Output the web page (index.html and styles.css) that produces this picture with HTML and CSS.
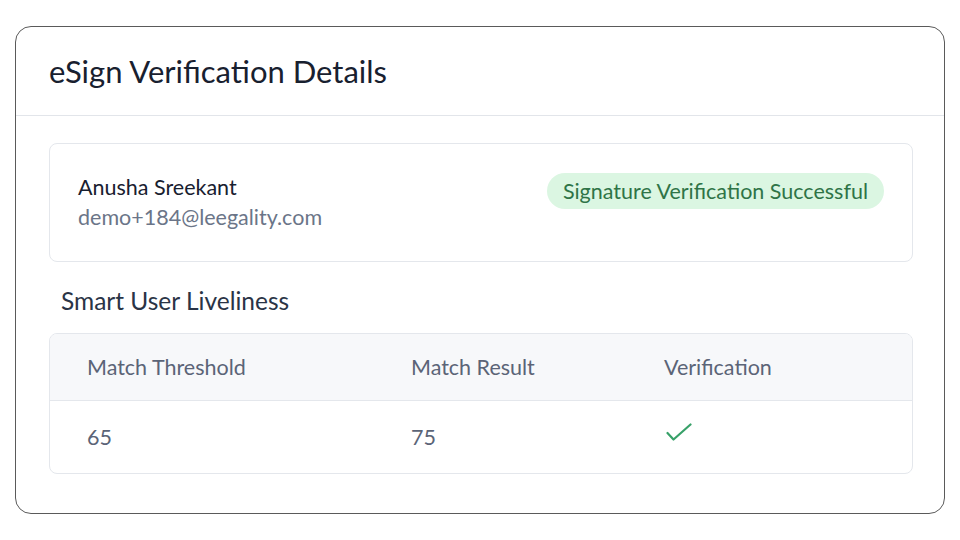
FILE: index.html
```html
<!DOCTYPE html>
<html lang="en">
<head>
<meta charset="utf-8">
<title>eSign Verification Details</title>
<link rel="stylesheet" href="styles.css">
</head>
<body>
<div class="card">
  <div class="card-header">
    <h1 class="title">eSign Verification Details</h1>
  </div>
  <div class="card-body">
    <div class="signer">
      <div class="signer-info">
        <div class="signer-name">Anusha Sreekant</div>
        <div class="signer-email">demo+184@leegality.com</div>
      </div>
      <span class="badge">Signature Verification Successful</span>
    </div>
    <h2 class="section-title">Smart User Liveliness</h2>
    <div class="table">
      <div class="row head">
        <div class="cell">Match Threshold</div>
        <div class="cell">Match Result</div>
        <div class="cell">Verification</div>
      </div>
      <div class="row">
        <div class="cell">65</div>
        <div class="cell">75</div>
        <div class="cell">
          <svg class="check" width="26" height="19" viewBox="0 0 26 19" aria-hidden="true">
            <path d="M1.5 10 L7.5 16.5 L24.5 1.5" fill="none" stroke="#38a169" stroke-width="2.2" stroke-linecap="round" stroke-linejoin="round"/>
          </svg>
        </div>
      </div>
    </div>
  </div>
</div>
</body>
</html>
```
FILE: styles.css
```css
* { box-sizing: border-box; }
html, body { margin: 0; padding: 0; background: #ffffff; }
body {
  font-family: Lato, "Open Sans", sans-serif;
  padding: 26px 15px 0 15px;
}
.card {
  width: 930px;
  height: 488px;
  border: 1px solid #5a5a5a;
  border-radius: 16px;
  background: #fff;
}
.card-header {
  height: 89px;
  border-bottom: 1px solid #e2e5ea;
  display: flex;
  align-items: center;
  padding: 0 33px;
}
.title {
  margin: 0;
  font-size: 31px;
  font-weight: 400;
  color: #18202f;
}
.card-body {
  padding: 27px 31px 0 33px;
}
.signer {
  border: 1px solid #e4e7ec;
  border-radius: 8px;
  padding: 28px 28px 29px 28px;
  display: flex;
  justify-content: space-between;
  align-items: flex-start;
}
.signer-name {
  font-size: 21.5px;
  line-height: 30px;
  color: #18202f;
}
.signer-email {
  font-size: 21.5px;
  line-height: 30px;
  color: #6b7588;
}
.badge {
  margin-top: 1px;
  height: 36px;
  line-height: 36px;
  padding: 0 16px;
  border-radius: 18px;
  background: #dbf6e2;
  color: #2f7447;
  font-size: 21.5px;
}
.section-title {
  margin: 24px 0 0 12px;
  font-size: 24.5px;
  line-height: 30px;
  font-weight: 400;
  color: #2a3446;
}
.table {
  margin-top: 17px;
  border: 1px solid #e4e7ec;
  border-radius: 8px;
  overflow: hidden;
}
.row {
  display: grid;
  grid-template-columns: 324px 253px 1fr;
  padding-left: 37px;
  height: 72px;
  align-items: center;
}
.row.head {
  background: #f7f8fa;
  height: 67px;
  border-bottom: 1px solid #e4e7ec;
}
.cell {
  font-size: 21.5px;
  color: #5b6477;
}
.row .check { display: block; margin: -9px 0 0 2px; }
```
